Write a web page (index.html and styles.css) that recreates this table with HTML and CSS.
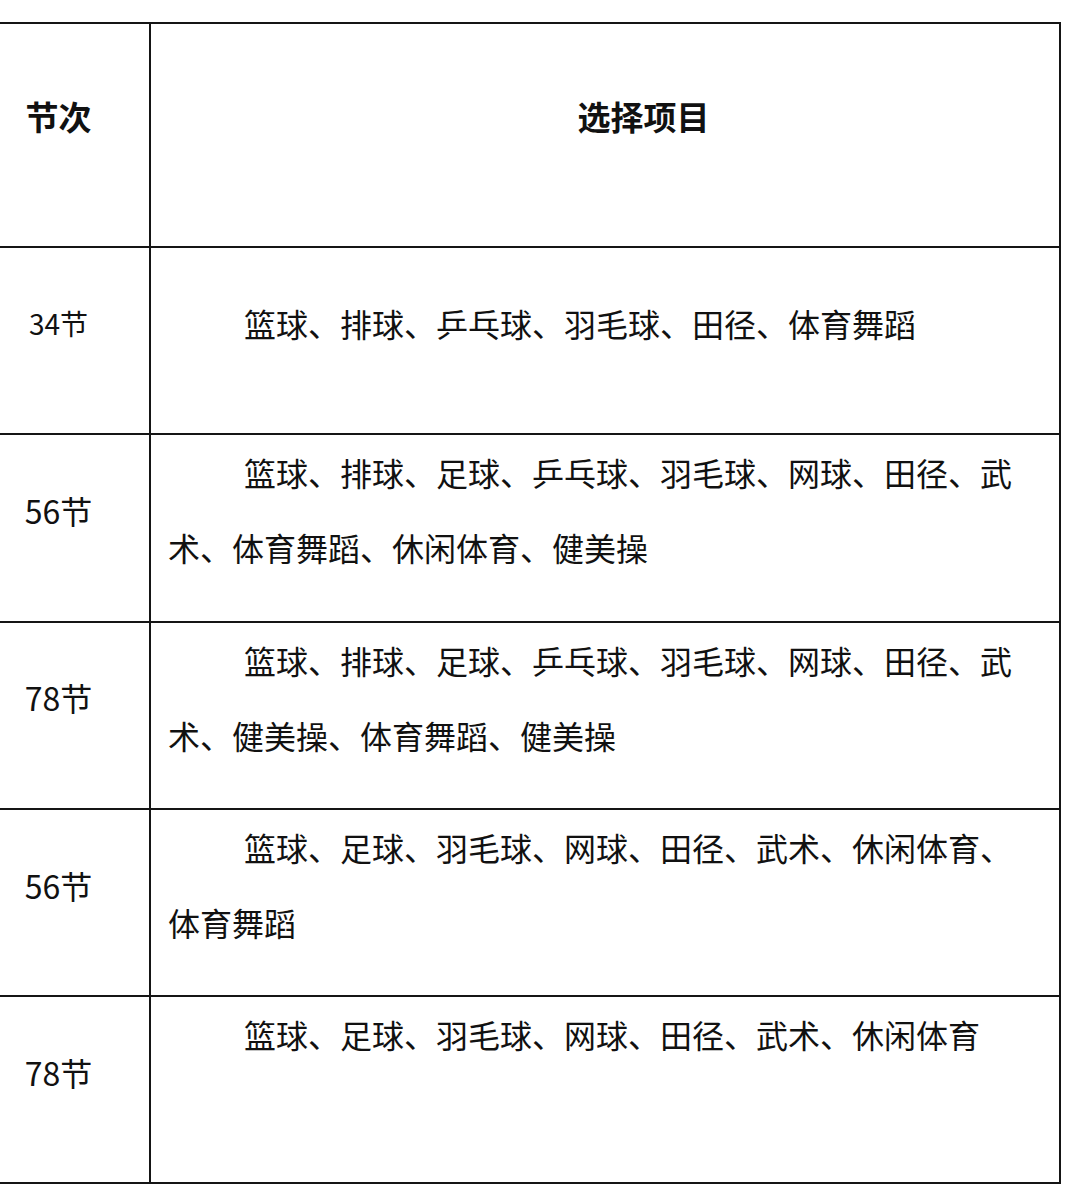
FILE: index.html
```html
<!DOCTYPE html>
<html lang="zh-CN">
<head>
<meta charset="utf-8">
<title>节次选择项目</title>
<link rel="stylesheet" href="styles.css">
</head>
<body>
<table class="schedule">
  <colgroup>
    <col class="col-period">
    <col class="col-items">
  </colgroup>
  <thead>
    <tr class="head-row">
      <th class="period">节次</th>
      <th class="items">选择项目</th>
    </tr>
  </thead>
  <tbody>
    <tr>
      <td class="period small">34节</td>
      <td class="items">篮球、排球、乒乓球、羽毛球、田径、体育舞蹈</td>
    </tr>
    <tr>
      <td class="period">56节</td>
      <td class="items">篮球、排球、足球、乒乓球、羽毛球、网球、田径、武术、体育舞蹈、休闲体育、健美操</td>
    </tr>
    <tr>
      <td class="period">78节</td>
      <td class="items">篮球、排球、足球、乒乓球、羽毛球、网球、田径、武术、健美操、体育舞蹈、健美操</td>
    </tr>
    <tr>
      <td class="period">56节</td>
      <td class="items">篮球、足球、羽毛球、网球、田径、武术、休闲体育、体育舞蹈</td>
    </tr>
    <tr>
      <td class="period">78节</td>
      <td class="items top">篮球、足球、羽毛球、网球、田径、武术、休闲体育</td>
    </tr>
  </tbody>
</table>
</body>
</html>
```

FILE: styles.css
```css
html, body {
  margin: 0;
  padding: 0;
  background: #ffffff;
}

body {
  font-family: "Noto Sans CJK SC", "Noto Sans", sans-serif;
  color: #111111;
  overflow: hidden;
}

.schedule {
  margin: 22px 0 0 -34px;
  border-collapse: separate;
  border-spacing: 0;
  border-top: 2px solid #151515;
  border-left: 2px solid #151515;
  table-layout: fixed;
  width: 1095px;
}

.col-period {
  width: 183px;
}

.col-items {
  width: 910px;
}

.schedule th,
.schedule td {
  border-right: 2px solid #151515;
  border-bottom: 2px solid #151515;
  padding: 0 16px 35px 17px;
  height: 150.3px;
  vertical-align: middle;
  font-size: 32px;
  line-height: 75px;
  font-weight: 400;
  word-break: break-all;
}

.schedule .head-row th {
  height: 184px;
  padding-bottom: 38px;
  font-size: 33px;
  font-weight: 700;
}

.schedule .period {
  text-align: center;
  padding-left: 8px;
  padding-right: 8px;
}

.schedule .period.small {
  font-size: 28px;
}

.schedule .items {
  text-align: left;
  text-indent: 76px;
}

.schedule th.items {
  text-align: center;
}

.schedule td.top {
  vertical-align: top;
}
```
